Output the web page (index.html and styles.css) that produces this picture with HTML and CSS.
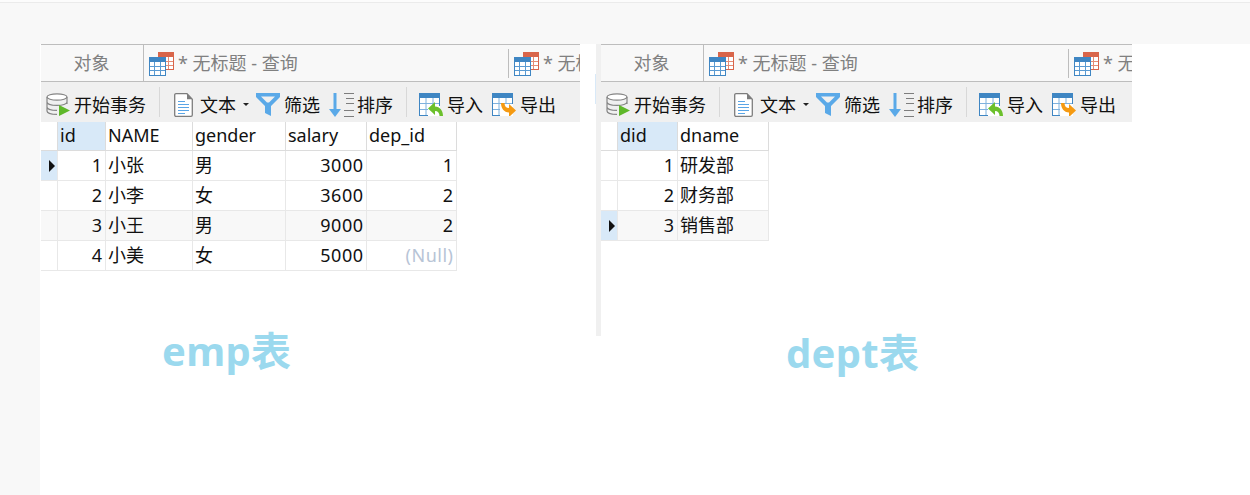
FILE: index.html
```html
<!DOCTYPE html>
<html lang="zh-CN">
<head>
<meta charset="utf-8">
<title>emp / dept</title>
<link rel="stylesheet" href="styles.css">
</head>
<body>
<svg class="defs" xmlns="http://www.w3.org/2000/svg">
  <symbol id="i-tables" viewBox="0 0 25 24">
    <rect x="9.5" y="0.5" width="15" height="17" fill="#fff" stroke="#d9654a"/>
    <rect x="9" y="0" width="16" height="5" fill="#d9654a"/>
    <path d="M14.5 5v12M19.5 5v12M10 9.5h14M10 13.5h14" stroke="#e58d76" fill="none"/>
    <rect x="0.5" y="5.5" width="16" height="18" fill="#fff" stroke="#3f86c3"/>
    <rect x="0" y="5" width="17" height="5" fill="#3f86c3"/>
    <path d="M5.5 10v13M11.5 10v13M1 14.5h15M1 18.5h15" stroke="#5b9bd2" fill="none"/>
  </symbol>
  <symbol id="i-db" viewBox="0 0 24 23">
    <ellipse cx="11" cy="4" rx="10" ry="3.2" fill="#fff" stroke="#858585" stroke-width="1.2"/>
    <path d="M1 4v14c0 2 4.500 3.400 10 3.400M21 4v7M1 9c0 2 4.500 3.400 10 3.400s10-1.400 10-3.400M1 14c0 2 4.500 3.400 10 3.400" fill="none" stroke="#858585" stroke-width="1.2"/>
    <path d="M13 12l11 5.500L13 23z" fill="#5fb82a"/>
  </symbol>
  <symbol id="i-doc" viewBox="0 0 19 24">
    <path d="M2 .7h11l5.300 5.500V22a1.300 1.300 0 0 1-1.300 1.300H2A1.300 1.300 0 0 1 .7 22V2A1.300 1.300 0 0 1 2 .7z" fill="#fff" stroke="#7d7d7d" stroke-width="1.300"/>
    <path d="M13 .7v5.500h5.300z" fill="#7d7d7d"/>
    <path d="M4 8.500h7M4 11.500h11M4 14.500h11M4 17.500h11M4 20.500h7" stroke="#5aa5e6" fill="none"/>
  </symbol>
  <symbol id="i-filter" viewBox="0 0 24 23">
    <path d="M0 0h24v4L15 13v10l-6-3v-7L0 4z" fill="#5aa9e8"/>
    <path d="M5 3.500h14l-6 6h-2z" fill="#f0f0f0"/>
  </symbol>
  <symbol id="i-sort" viewBox="0 0 25 24">
    <path d="M4.500 0h3v16h4.500L6 24 0 16h4.500z" fill="#5aa9e8"/>
    <path d="M15 .5h10M17 5.500h8M17 10.500h8M15 17.500h10M15 23.500h10" stroke="#7d7d7d" fill="none"/>
  </symbol>
  <symbol id="i-import" viewBox="0 0 24 23">
    <rect x=".5" y=".5" width="20" height="22" fill="#fff" stroke="#3f86c3"/>
    <rect width="21" height="5" fill="#3f86c3"/>
    <path d="M7 5v17M14 5v9M1 10.500h19M1 16.500h8" stroke="#7fb2de" fill="none"/>
    <rect x="9" y="13" width="12" height="10" fill="#fff"/>
    <path d="M24 23h-3.500c0-3-1.500-5-4.500-5v4l-7-6.500 7-6.500v4.500c5 .2 8 4 8 9.500z" fill="#6cc02c"/>
  </symbol>
  <symbol id="i-export" viewBox="0 0 24 23">
    <rect x=".5" y=".5" width="20" height="22" fill="#fff" stroke="#3f86c3"/>
    <rect width="21" height="5" fill="#3f86c3"/>
    <path d="M7 5v17M14 5v7M1 10.500h19M1 16.500h8" stroke="#7fb2de" fill="none"/>
    <rect x="8" y="11" width="13" height="12" fill="#fff"/>
    <path d="M9 10h3.500c0 3 1.500 5 4.500 5v-4l7 6.500-7 6.500v-4.500c-5-.2-8-4-8-9.500z" fill="#f59a12"/>
  </symbol>
</svg>

<div class="topline"></div>
<main class="stage">
  <section class="panel panel-emp">
    <div class="tabs">
      <div class="tab-obj">对象</div>
      <div class="tab-query"><svg class="ic-tables"><use href="#i-tables"/></svg><span>* 无标题 - 查询</span></div>
      <div class="tab-next"><svg class="ic-tables"><use href="#i-tables"/></svg><span>* 无标</span></div>
    </div>
    <div class="toolbar">
      <span class="tool t-db"><svg class="ic-db"><use href="#i-db"/></svg>开始事务</span>
      <i class="sep sep-a"></i>
      <span class="tool t-doc"><svg class="ic-doc"><use href="#i-doc"/></svg>文本<b class="caret"></b></span>
      <span class="tool t-filter"><svg class="ic-filter"><use href="#i-filter"/></svg>筛选</span>
      <span class="tool t-sort"><svg class="ic-sort"><use href="#i-sort"/></svg>排序</span>
      <i class="sep sep-b"></i>
      <span class="tool t-import"><svg class="ic-import"><use href="#i-import"/></svg>导入</span>
      <span class="tool t-export"><svg class="ic-import"><use href="#i-export"/></svg>导出</span>
    </div>
    <table class="grid grid-emp">
      <colgroup><col class="c17"><col class="c48"><col class="c87"><col class="c93"><col class="c81"><col class="c90"></colgroup>
      <thead><tr><th class="rh"></th><th class="sel">id</th><th>NAME</th><th>gender</th><th>salary</th><th>dep_id</th></tr></thead>
      <tbody>
        <tr><td class="rh cur"><b class="mark"></b></td><td class="n">1</td><td>小张</td><td>男</td><td class="n">3000</td><td class="n">1</td></tr>
        <tr><td class="rh"></td><td class="n">2</td><td>小李</td><td>女</td><td class="n">3600</td><td class="n">2</td></tr>
        <tr class="alt"><td class="rh"></td><td class="n">3</td><td>小王</td><td>男</td><td class="n">9000</td><td class="n">2</td></tr>
        <tr><td class="rh"></td><td class="n">4</td><td>小美</td><td>女</td><td class="n">5000</td><td class="n null">(Null)</td></tr>
      </tbody>
    </table>
    <h2 class="label label-emp">emp表</h2>
  </section>

  <div class="gap"><i class="tick"></i></div>
  <div class="strip"></div>

  <section class="panel panel-dept">
    <div class="tabs">
      <div class="tab-obj">对象</div>
      <div class="tab-query"><svg class="ic-tables"><use href="#i-tables"/></svg><span>* 无标题 - 查询</span></div>
      <div class="tab-next"><svg class="ic-tables"><use href="#i-tables"/></svg><span>* 无</span></div>
    </div>
    <div class="toolbar">
      <span class="tool t-db"><svg class="ic-db"><use href="#i-db"/></svg>开始事务</span>
      <i class="sep sep-a"></i>
      <span class="tool t-doc"><svg class="ic-doc"><use href="#i-doc"/></svg>文本<b class="caret"></b></span>
      <span class="tool t-filter"><svg class="ic-filter"><use href="#i-filter"/></svg>筛选</span>
      <span class="tool t-sort"><svg class="ic-sort"><use href="#i-sort"/></svg>排序</span>
      <i class="sep sep-b"></i>
      <span class="tool t-import"><svg class="ic-import"><use href="#i-import"/></svg>导入</span>
      <span class="tool t-export"><svg class="ic-import"><use href="#i-export"/></svg>导出</span>
    </div>
    <table class="grid grid-dept">
      <colgroup><col class="c17"><col class="c60"><col class="c91"></colgroup>
      <thead><tr><th class="rh"></th><th class="sel">did</th><th>dname</th></tr></thead>
      <tbody>
        <tr><td class="rh"></td><td class="n">1</td><td>研发部</td></tr>
        <tr><td class="rh"></td><td class="n">2</td><td>财务部</td></tr>
        <tr class="alt"><td class="rh cur"><b class="mark"></b></td><td class="n">3</td><td>销售部</td></tr>
      </tbody>
    </table>
    <h2 class="label label-dept">dept表</h2>
  </section>
</main>
</body>
</html>
```

FILE: styles.css
```css
* { box-sizing: border-box; }
html, body { height: 100%; }
body {
  margin: 0;
  height: 495px;
  overflow: hidden;
  background: #f8f8f8;
  color: #111;
  font: 18px/24px "Noto Sans", "Noto Sans CJK SC", sans-serif;
}
.defs { display: none; }
.topline { height: 3px; background: #fcfcfc; border-bottom: 1px solid #ebebeb; margin-bottom: 41px; }
.stage {
  display: flex;
  margin-left: 40px;
  padding-left: 1px;
  height: 451px;
  background: #fff;
}
.panel { flex: none; overflow: hidden; }
.panel-emp { width: 539px; }
.panel-dept { width: 531px; }
.gap { flex: none; width: 16px; padding-top: 30px; }
.tick { display: block; width: 1px; height: 30px; margin-left: auto; background: #d8e9f8; }
.strip { flex: none; width: 5px; height: 292px; background: #f0f0f0; }

.tabs {
  display: flex;
  height: 38px;
  width: 100%;
  background: #f8f8f8;
  border-top: 1px solid #bdbdbd;
  border-bottom: 1px solid #bdbdbd;
  color: #808080;
  white-space: nowrap;
  overflow: hidden;
}
.tab-obj { flex: none; width: 103px; border-right: 1px solid #bdbdbd; text-align: center; line-height: 36px; padding-right: 1px; }
.tab-query { flex: none; width: 365px; position: relative; display: flex; align-items: center; padding-left: 5px; gap: 4px; }
.tab-query::after { content: ""; position: absolute; right: 0; top: 4px; height: 29px; width: 1px; background: #bdbdbd; }
.tab-next { flex: none; display: flex; align-items: center; padding-left: 5px; gap: 4px; }
.ic-tables { flex: none; width: 25px; height: 24px; margin-top: 2px; }

.toolbar {
  display: flex;
  align-items: center;
  height: 40px;
  background: #f0f0f0;
  padding-left: 5px;
  white-space: nowrap;
  overflow: hidden;
}
.tool { flex: none; display: flex; align-items: center; margin-top: 5px; }
.sep { flex: none; display: block; width: 1px; height: 30px; background: #d8d8d8; }
.sep-a { margin: 0 14px 0 13px; }
.sep-b { margin: 0 12px 0 13px; }
.ic-db { width: 24px; height: 23px; margin-right: 4px; }
.ic-doc { width: 19px; height: 24px; margin-right: 7px; }
.ic-filter { width: 24px; height: 23px; margin-right: 4px; }
.ic-sort { width: 25px; height: 24px; margin-right: 3px; }
.ic-import { width: 24px; height: 23px; margin-right: 4px; }
.t-sort, .t-export { margin-left: 9px; }
.t-filter { margin-left: 7px; }
.caret {
  display: block;
  width: 0; height: 0;
  margin-left: 7px;
  border: 3px solid transparent;
  border-top-color: #222;
  border-bottom: 0;
}

.grid { border-collapse: separate; border-spacing: 0; table-layout: fixed; }
.grid-emp { width: 416px; }
.grid-dept { width: 168px; }
.c17 { width: 17px; }
.c48 { width: 48px; }
.c87 { width: 87px; }
.c93 { width: 93px; }
.c81 { width: 81px; }
.c90 { width: 90px; }
.c60 { width: 60px; }
.c91 { width: 91px; }
.grid th, .grid td {
  height: 30px;
  padding: 0 2px 2px;
  border-right: 1px solid #e8e8e8;
  border-bottom: 1px solid #e8e8e8;
  font-weight: 400;
  text-align: left;
  white-space: nowrap;
  overflow: hidden;
}
.grid th { height: 29px; border-color: #dcdcdc; }
.grid th.rh, .grid td.rh { padding: 0; }
.grid th.sel, .grid td.cur { background: #d8e9f8; }
.grid td.n { text-align: right; padding-right: 2.5px; letter-spacing: .5px; }
.grid td.null { color: #b7c4d6; }
.alt td { background: #f8f8f8; }
.mark {
  display: block;
  width: 0; height: 0;
  margin-left: 8px;
  border-style: solid;
  border-width: 6px 0 6px 6px;
  border-color: transparent transparent transparent #111;
}

.label { margin: 0; font-size: 40px; line-height: 44px; font-weight: 700; letter-spacing: .3px; color: #9bd9ee; }
.label-emp { margin: 58px 0 0 121px; }
.label-dept { margin: 90px 0 0 185px; }
```
